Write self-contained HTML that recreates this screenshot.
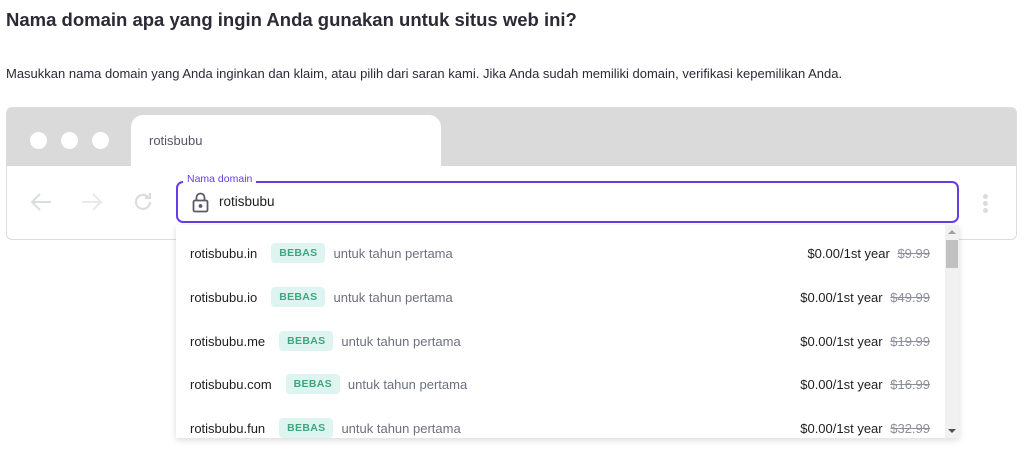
<!DOCTYPE html>
<html><head><meta charset="utf-8"><style>
*{box-sizing:border-box;margin:0;padding:0}
body{width:1024px;height:466px;background:#fff;font-family:"Liberation Sans",sans-serif;color:#1d1e20;position:relative;overflow:hidden}
h1{position:absolute;left:6px;top:9px;font-size:18.5px;font-weight:bold;color:#2b2a35}
p.d{position:absolute;left:6px;top:66px;font-size:13px;color:#2b2a35}
.frame{position:absolute;left:6px;top:107px;width:1011px;height:133px;border:1px solid #dadce0;border-radius:6px;overflow:hidden;background:#fff}
.top{position:absolute;left:0;top:0;width:100%;height:58px;background:#dadada}
.dot{position:absolute;top:24px;width:17px;height:17px;border-radius:50%;background:#fff}
.tab{position:absolute;left:124px;top:7px;width:310px;height:52px;background:#fff;border-radius:12px 12px 0 0;font-size:13px;color:#56566a;padding:18px 0 0 18px}
.inp{position:absolute;left:176px;top:181px;width:783px;height:42px;border:2px solid #673de6;border-radius:7px;background:#fff}
.lbl{position:absolute;left:183px;top:173px;font-size:10.5px;color:#673de6;background:#fff;padding:0 4px}
.val{position:absolute;left:219px;top:194px;font-size:13.5px;color:#1d1e20}
.dd{position:absolute;left:176px;top:225px;width:783px;height:213px;background:#fff;box-shadow:0 2px 6px rgba(0,0,0,.15);overflow:hidden}
.row{position:absolute;left:14px;height:20px;font-size:13px;display:flex;align-items:center;width:740px}
.b{background:#def4f0;color:#3fa57f;font-weight:bold;font-size:10.5px;padding:4px 8px;border-radius:4px;margin:0 8px 0 14px;letter-spacing:.3px}
.g{color:#6d7081}
.pr{position:absolute;right:0;font-size:13px}
.pr s{color:#8c8f9c;margin-left:4px}
.sb{position:absolute;right:0;top:0;width:14px;height:213px;background:#f1f1f1}
.th{position:absolute;right:1px;top:15px;width:12px;height:28px;background:#c1c1c1}
</style></head><body>
<h1>Nama domain apa yang ingin Anda gunakan untuk situs web ini?</h1>
<p class="d">Masukkan nama domain yang Anda inginkan dan klaim, atau pilih dari saran kami. Jika Anda sudah memiliki domain, verifikasi kepemilikan Anda.</p>
<div class="frame">
 <div class="top"></div>
 <div class="dot" style="left:23px"></div><div class="dot" style="left:54px"></div><div class="dot" style="left:85px"></div>
 <div class="tab">rotisbubu</div>
 <svg style="position:absolute;left:22px;top:83px" width="24" height="22" viewBox="0 0 24 22" fill="none" stroke="#dadce0" stroke-width="2"><path d="M22 11H3M11 3 3 11l8 8"/></svg>
 <svg style="position:absolute;left:73px;top:83px" width="24" height="22" viewBox="0 0 24 22" fill="none" stroke="#e8e8ee" stroke-width="2"><path d="M2 11h19M13 3l8 8-8 8"/></svg>
 <svg style="position:absolute;left:124px;top:82px" width="24" height="24" viewBox="0 0 24 24" fill="none" stroke="#dadce0" stroke-width="2.2"><path d="M19 12a7 7 0 1 1-2-5M19 3v5h-5"/></svg>
 <div style="position:absolute;left:976px;top:86px;width:5px;height:5px;border-radius:50%;background:#dadce0;box-shadow:0 7px 0 #dadce0,0 14px 0 #dadce0"></div>
</div>
<div class="inp"></div>
<div class="lbl">Nama domain</div>
<svg style="position:absolute;left:192px;top:192px" width="17" height="21" viewBox="0 0 17 21" fill="none" stroke="#5a5a6a" stroke-width="1.8"><rect x="1.5" y="8.5" width="14" height="11" rx="1.5"/><path d="M4.5 8.5V5.5a4 4 0 0 1 8 0v3"/><circle cx="8.5" cy="14" r="1" fill="#5a5a6a"/></svg>
<div class="val">rotisbubu</div>
<div class="dd">
 <div class="row" style="top:18px">rotisbubu.in<span class="b">BEBAS</span><span class="g">untuk tahun pertama</span><span class="pr">$0.00/1st year <s>$9.99</s></span></div>
 <div class="row" style="top:62px">rotisbubu.io<span class="b">BEBAS</span><span class="g">untuk tahun pertama</span><span class="pr">$0.00/1st year <s>$49.99</s></span></div>
 <div class="row" style="top:106px">rotisbubu.me<span class="b">BEBAS</span><span class="g">untuk tahun pertama</span><span class="pr">$0.00/1st year <s>$19.99</s></span></div>
 <div class="row" style="top:149px">rotisbubu.com<span class="b">BEBAS</span><span class="g">untuk tahun pertama</span><span class="pr">$0.00/1st year <s>$16.99</s></span></div>
 <div class="row" style="top:193px">rotisbubu.fun<span class="b">BEBAS</span><span class="g">untuk tahun pertama</span><span class="pr">$0.00/1st year <s>$32.99</s></span></div>
 <div class="sb"><div style="position:absolute;left:3px;top:5px;border:4px solid transparent;border-bottom:4px solid #a0a0a0;border-top:0"></div><div class="th"></div><div style="position:absolute;left:3px;bottom:5px;border:4px solid transparent;border-top:4px solid #505050;border-bottom:0"></div></div>
</div>
</body></html>
